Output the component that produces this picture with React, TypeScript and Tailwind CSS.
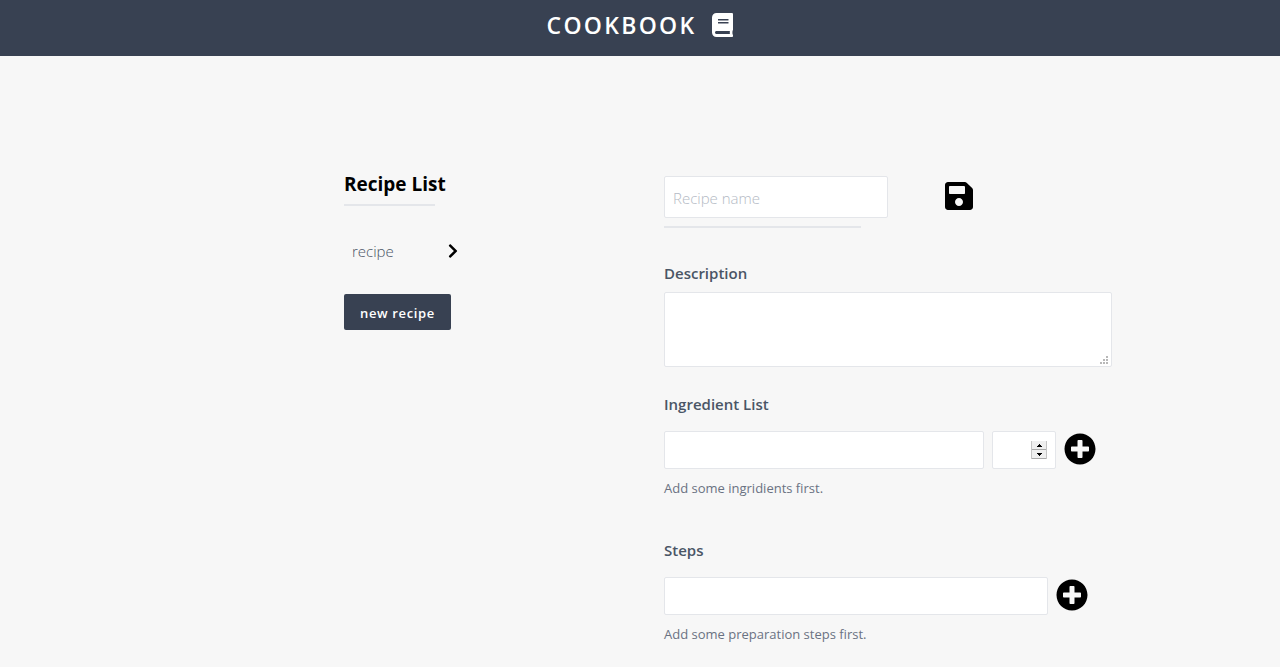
import { useState } from "react";
import { FaBook, FaChevronRight, FaPlusCircle, FaSave } from "react-icons/fa";

const field = "rounded-xs border border-[#e4e6ea] bg-white px-2 text-gray-700 outline-none";

function Spinner({ onStep }: { onStep: (delta: number) => void }) {
  return (
    <div className="absolute top-[10px] right-[9px] flex h-[18px] w-4 flex-col border-x border-[#c4c4c4] bg-[#efefef]">
      <button type="button" aria-label="Increase amount" onClick={() => onStep(1)} className="flex h-2 items-center justify-center">
        <svg viewBox="0 0 5 3" className="h-[3px] w-[5px]" shapeRendering="crispEdges">
          <path d="M2 0h1v1h1v1h1v1H0V2h1V1h1z" />
        </svg>
      </button>
      <span className="h-px bg-[#a9a9a9]" />
      <button type="button" aria-label="Decrease amount" onClick={() => onStep(-1)} className="flex h-2 items-center justify-center">
        <svg viewBox="0 0 5 3" className="h-[3px] w-[5px]" shapeRendering="crispEdges">
          <path d="M0 0h5v1H4v1H3v1H2V2H1V1H0z" />
        </svg>
      </button>
      <span className="h-px bg-[#a9a9a9]" />
    </div>
  );
}

function AddButton({ label }: { label: string }) {
  return (
    <button type="button" aria-label={label} className="pb-0.5 text-black">
      <FaPlusCircle className="size-8" />
    </button>
  );
}

export default function App() {
  const [amount, setAmount] = useState("");

  return (
    <div className="min-h-screen bg-[#f7f7f7] font-['Open_Sans','Noto_Sans',sans-serif] text-black">
      <header className="flex h-14 items-start justify-center gap-4 bg-[#384152] pt-[9px] text-white">
        <h1 className="text-[23px] leading-8 font-semibold tracking-widest">COOKBOOK</h1>
        <FaBook className="mt-1 h-6 w-[21px]" />
      </header>

      <main className="grid grid-cols-4 pt-[116px]">
        <section className="col-start-2 px-6">
          <h2 className="text-[19px] leading-6 font-bold">Recipe List</h2>
          <div className="mt-2 h-0.5 w-1/3 bg-[#e4e6ea]" />
          <ul className="mt-[33px]">
            <li>
              <a href="#recipe" className="flex w-[114px] items-center justify-between pl-2 text-[15px] leading-6 font-light text-gray-600">
                recipe
                <FaChevronRight className="h-4 w-[10px] text-black" />
              </a>
            </li>
          </ul>
          <button type="button" className="mt-[31px] h-9 rounded-xs bg-[#384152] px-4 pt-[3px] text-[13px] font-semibold tracking-wider text-white">
            new recipe
          </button>
        </section>

        <form className="col-span-2 px-6 pt-1">
          <div className="flex items-center">
            <input aria-label="Recipe name" placeholder="Recipe name" className={`${field} h-[42px] w-56 pt-0.5 text-[15px] font-light placeholder:text-[#b4bac4]`} />
            <button type="button" aria-label="Save recipe" className="ml-[57px] pb-0.5">
              <FaSave className="h-8 w-7" />
            </button>
          </div>
          <div className="mt-2 h-0.5 w-1/3 bg-[#e4e6ea]" />

          <label htmlFor="description" className="mt-[33px] block text-[15px] leading-6 font-semibold text-gray-600">
            Description
          </label>
          <div className="relative mt-[7px] max-w-md">
            <textarea id="description" className={`${field} block h-[75px] w-full resize-none py-2`} />
            <svg viewBox="0 0 8 8" className="pointer-events-none absolute right-1 bottom-[3px] size-2" fill="#b8b8b8" shapeRendering="crispEdges">
              <path d="M6 0h2v2H6zM3 3h2v2H3zM6 3h2v2H6zM0 6h2v2H0zM3 6h2v2H3zM6 6h2v2H6z" />
            </svg>
          </div>

          <label htmlFor="ingredient" className="mt-[25px] block text-[15px] leading-6 font-semibold text-gray-600">
            Ingredient List
          </label>
          <div className="mt-[15px] flex items-center gap-2">
            <input id="ingredient" className={`${field} h-[38px] w-80`} />
            <div className="relative w-16">
              <input
                aria-label="Amount"
                inputMode="numeric"
                value={amount}
                onChange={(event) => setAmount(event.target.value)}
                className={`${field} block h-[38px] w-full pr-6`}
              />
              <Spinner onStep={(delta) => setAmount(String(Number(amount) + delta))} />
            </div>
            <AddButton label="Add ingredient" />
          </div>
          <p className="mt-[7px] text-[13px] leading-6 text-gray-500">Add some ingridients first.</p>

          <label htmlFor="step" className="mt-[38px] block text-[15px] leading-6 font-semibold text-gray-600">
            Steps
          </label>
          <div className="mt-[15px] flex items-center gap-2">
            <input id="step" className={`${field} h-[38px] w-96`} />
            <AddButton label="Add step" />
          </div>
          <p className="mt-[7px] text-[13px] leading-6 text-gray-500">Add some preparation steps first.</p>
        </form>
      </main>
    </div>
  );
}
